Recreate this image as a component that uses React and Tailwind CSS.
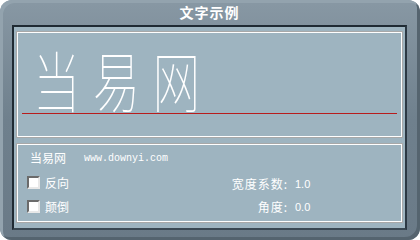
import React from 'react'

// Font preview dialog: stroked sample text on top, options below.
function Check({ label }) {
  return (
    <label className="flex items-center gap-[5px] h-[13px]">
      <span className="w-[13px] h-[13px] bg-white border-2 border-t-[#6b6b6b] border-l-[#6b6b6b] border-r-[#e8e8e8] border-b-[#e8e8e8]" />
      <span>{label}</span>
    </label>
  )
}

export default function App() {
  return (
    <div className="w-[420px] h-[240px] bg-white">
      <div className="w-full h-full rounded-[12px] bg-gradient-to-b from-[#8898a4] via-[#6f808d] to-[#6a7a87] shadow-[inset_3px_3px_0_#93a3ae,inset_-3px_-3px_0_#55646f] flex flex-col pl-[12px] pr-[13px] pb-[10px]">
        <div className="h-[25px] flex items-center justify-center text-white font-bold text-[14px] tracking-[1px] [font-family:'Noto_Sans_CJK_SC',sans-serif]">
          文字示例
        </div>
        <div className="flex-1 bg-[#9eb4c0] border-2 border-[#1f2a33] border-r-[#2b3843] border-b-[#3a4853] px-[3px] pt-[5px] pb-[6px] flex flex-col gap-[7px] text-white [font-family:'Noto_Sans_CJK_SC',sans-serif]">
          <div className="h-[105px] border border-white shadow-[0_0_0_1px_#a8a8a8] flex flex-col pl-[4px] pr-[4px]">
            <div className="h-[80px] flex items-end pl-[11px]">
              <div className="text-[66px] leading-none font-thin tracking-[17px] scale-x-[0.72] origin-bottom-left -translate-y-[2px] whitespace-nowrap [font-family:'Noto_Sans_CJK_SC',sans-serif]">
                当易网
              </div>
            </div>
            <div className="h-px bg-[#b81c1c]" />
          </div>
          <div className="flex-1 border border-white shadow-[0_0_0_1px_#a8a8a8] text-[12px] pl-[9px] pr-[4px] pt-[6px] flex">
            <div className="flex flex-col gap-[11px]">
              <div className="flex items-center h-[14px]">
                <span className="pl-[3px]">当易网</span>
                <span className="ml-[18px] text-[10px] [font-family:'Liberation_Mono',monospace]">www.downyi.com</span>
              </div>
              <Check label="反向" />
              <Check label="颠倒" />
            </div>
            <div className="ml-auto mr-[78px] mt-[26px] flex flex-col gap-[9px] items-end">
              <div className="flex items-center h-[14px]">
                <span className="tracking-[1px]">宽度系数:</span>
                <span className="w-[24px] ml-[7px] text-[11px] [font-family:'Liberation_Sans',sans-serif]">1.0</span>
              </div>
              <div className="flex items-center h-[14px]">
                <span className="tracking-[1px]">角度:</span>
                <span className="w-[24px] ml-[7px] text-[11px] [font-family:'Liberation_Sans',sans-serif]">0.0</span>
              </div>
            </div>
          </div>
        </div>
      </div>
    </div>
  )
}
